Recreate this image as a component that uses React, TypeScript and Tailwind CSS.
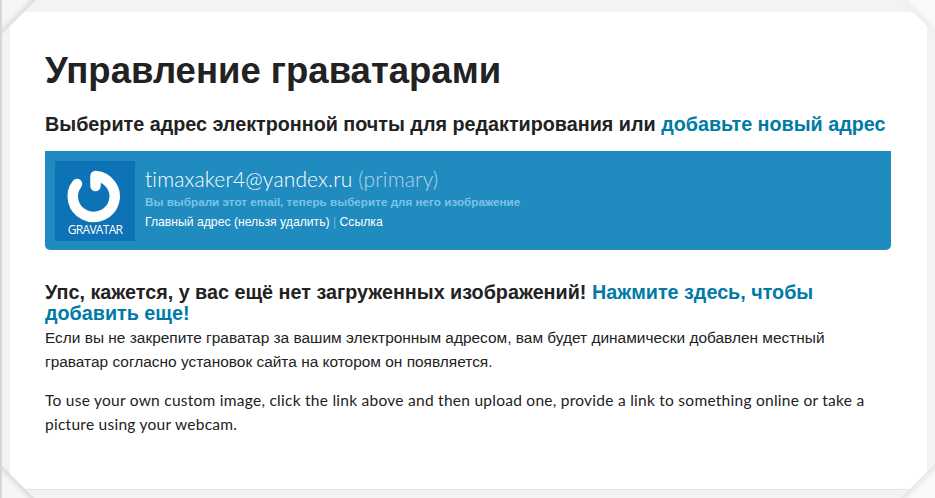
const sans = "font-['Liberation_Sans',Arial,sans-serif]";

function GravatarLogo() {
  return (
    <div className="flex h-20 w-20 shrink-0 flex-col items-center bg-[#0d72b6]">
      <svg width="80" height="64" viewBox="0 0 80 64" fill="none">
        <path
          d="M40.5 25 L40.5 15 A21 20.5 0 1 1 22 23"
          stroke="#ffffff"
          strokeWidth="10.5"
          strokeLinecap="round"
          strokeLinejoin="round"
        />
      </svg>
      <span className="mt-[-1px] font-['Open_Sans',sans-serif] text-[12px] leading-[12px] tracking-[-0.7px] text-white">
        GRAVATAR
      </span>
    </div>
  );
}

function CornerFold({ className }: { className: string }) {
  return <div className={`absolute h-[34px] w-[34px] ${className}`} />;
}

export default function App() {
  return (
    <div className="relative h-[498px] w-[935px] overflow-hidden border-l-2 border-[#d6d6d6] bg-[#f3f3f3] pb-2 pl-[8px] pr-[8px] pt-3">
      <div className="h-full border-b border-[#e4e4e4] bg-white pl-[35px] pr-[36px] pt-[35px]">
        <h1 className={`${sans} text-[36.5px] font-bold leading-[48px] text-[#222222]`}>
          Управление граватарами
        </h1>
        <h2 className={`${sans} mt-[17px] text-[19.75px] font-bold leading-[24px] text-[#222222] whitespace-nowrap`}>
          Выберите адрес электронной почты для редактирования или{" "}
          <a className="text-[#007aa6]">добавьте новый адрес</a>
        </h2>
        <div className="mt-[15px] flex h-[99px] items-start rounded-b-[5px] bg-[#1f8bbf] p-[10px]">
          <GravatarLogo />
          <div className="ml-[10px] pt-[6px]">
            <div className="font-['Lato',sans-serif] text-[21px] font-light leading-[24px] tracking-[0.15px] text-white">
              timaxaker4@yandex.ru <span className="text-[#b4d5e6]">(primary)</span>
            </div>
            <div className={`${sans} mt-[4px] text-[11.7px] font-bold leading-[14px] text-[#7cc4e6]`}>
              Вы выбрали этот email, теперь выберите для него изображение
            </div>
            <div className={`${sans} mt-[6px] text-[12.2px] leading-[14px] text-white`}>
              Главный адрес (нельзя удалить) <span className="text-[#6bb8dc]">|</span> Ссылка
            </div>
          </div>
        </div>
        <h3 className={`${sans} mt-[32px] text-[19.75px] font-bold leading-[21px] text-[#222222]`}>
          Упс, кажется, у вас ещё нет загруженных изображений!{" "}
          <a className="text-[#007aa6]">Нажмите здесь, чтобы добавить еще!</a>
        </h3>
        <p className={`${sans} mt-[2px] pr-[10px] text-[15.45px] leading-[24px] text-[#222222]`}>
          Если вы не закрепите граватар за вашим электронным адресом, вам будет динамически добавлен местный граватар согласно установок сайта на котором он появляется.
        </p>
        <p className="mt-[14px] font-['Lato',sans-serif] text-[15.5px] leading-[24px] tracking-[0.26px] text-[#222222]">
          To use your own custom image, click the link above and then upload one, provide a link to something online or take a picture using your webcam.
        </p>
      </div>
      <CornerFold className="left-[-2px] top-0 h-[36px] w-[36px] [clip-path:polygon(0_0,100%_0,0_100%)] bg-[linear-gradient(135deg,#f6f6f6_36%,#dcdcdc_50%)]" />
      <CornerFold className="right-0 top-0 [clip-path:polygon(0_0,100%_0,100%_100%)] bg-[linear-gradient(225deg,#f9f9f9_36%,#ececec_50%)]" />
      <CornerFold className="bottom-0 left-[-2px] [clip-path:polygon(0_0,100%_100%,0_100%)] bg-[linear-gradient(45deg,#f6f6f6_36%,#dcdcdc_50%)]" />
      <CornerFold className="bottom-0 right-0 [clip-path:polygon(100%_0,100%_100%,0_100%)] bg-[linear-gradient(315deg,#f9f9f9_36%,#e6e6e6_50%)]" />
    </div>
  );
}
